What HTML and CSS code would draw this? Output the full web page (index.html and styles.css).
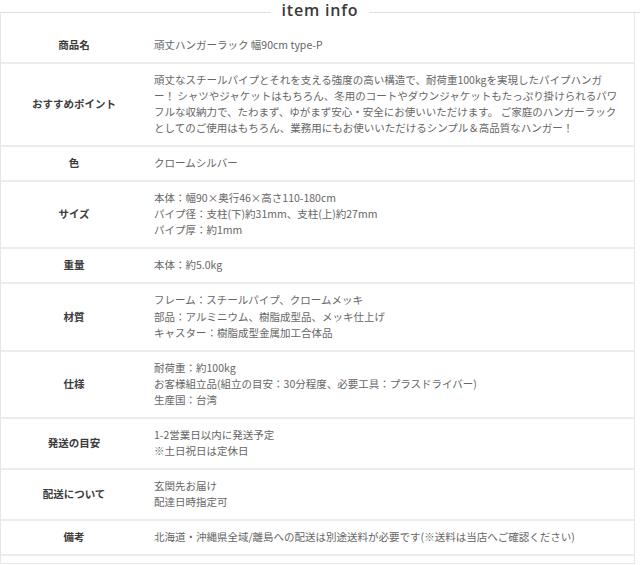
FILE: index.html
```html
<!DOCTYPE html>
<html lang="ja">
<head>
<meta charset="utf-8">
<title>item info</title>
<link rel="stylesheet" href="styles.css">
</head>
<body>
<div class="heading"><span class="heading-text">item info</span></div>
<div class="box">
  <table class="spec">
    <tr><th>商品名</th><td>頑丈ハンガーラック 幅90cm type-P</td></tr>
    <tr><th>おすすめポイント</th><td>頑丈なスチールパイプとそれを支える強度の高い構造で、耐荷重100kgを実現したパイプハンガ<br>ー！ シャツやジャケットはもちろん、冬用のコートやダウンジャケットもたっぷり掛けられるパワ<br>フルな収納力で、たわまず、ゆがまず安心・安全にお使いいただけます。 ご家庭のハンガーラック<br>としてのご使用はもちろん、業務用にもお使いいただけるシンプル＆高品質なハンガー！</td></tr>
    <tr><th>色</th><td>クロームシルバー</td></tr>
    <tr><th>サイズ</th><td>本体：幅90×奥行46×高さ110-180cm<br>パイプ径：支柱(下)約31mm、支柱(上)約27mm<br>パイプ厚：約1mm</td></tr>
    <tr><th>重量</th><td>本体：約5.0kg</td></tr>
    <tr><th>材質</th><td>フレーム：スチールパイプ、クロームメッキ<br>部品：アルミニウム、樹脂成型品、メッキ仕上げ<br>キャスター：樹脂成型金属加工合体品</td></tr>
    <tr><th>仕様</th><td>耐荷重：約100kg<br>お客様組立品(組立の目安：30分程度、必要工具：プラスドライバー)<br>生産国：台湾</td></tr>
    <tr><th>発送の目安</th><td>1-2営業日以内に発送予定<br>※土日祝日は定休日</td></tr>
    <tr><th>配送について</th><td>玄関先お届け<br>配達日時指定可</td></tr>
    <tr><th>備考</th><td>北海道・沖縄県全域/離島への配送は別途送料が必要です(※送料は当店へご確認ください)</td></tr>
  </table>
</div>
</body>
</html>
```
FILE: styles.css
```css
html, body {
  margin: 0;
  padding: 0;
  background: #ffffff;
}

body {
  width: 640px;
  font-family: "Noto Sans CJK JP", "Noto Sans", sans-serif;
  color: #666666;
}

.heading {
  display: flex;
  align-items: flex-start;
  height: 24px;
}

.heading::before,
.heading::after {
  content: "";
  flex: 1;
  align-self: center;
  border-top: 1px solid #dedede;
}

.heading-text {
  padding: 0 11px;
  font-family: "Open Sans", "Liberation Sans", sans-serif;
  font-weight: 600;
  font-size: 16px;
  line-height: 21px;
  letter-spacing: 0.8px;
  color: #3a3a3a;
}

.box {
  margin: -12px 5px 0 0;
  padding: 17px 0 7px;
  border-left: 1px solid #e6e6e6;
  border-right: 1px solid #e6e6e6;
  border-bottom: 1px solid #e6e6e6;
}

.spec {
  width: 100%;
  border-collapse: collapse;
  font-size: 10.5px;
  line-height: 16.05px;
}

.spec th,
.spec td {
  padding: 8px 0 9px;
  border-bottom: 2px solid #ececec;
  vertical-align: middle;
}

.spec th {
  width: 146px;
  text-align: center;
  font-weight: 700;
  color: #3c3c3c;
}

.spec td {
  padding-left: 7px;
  text-align: left;
  color: #666666;
  white-space: nowrap;
}
```
